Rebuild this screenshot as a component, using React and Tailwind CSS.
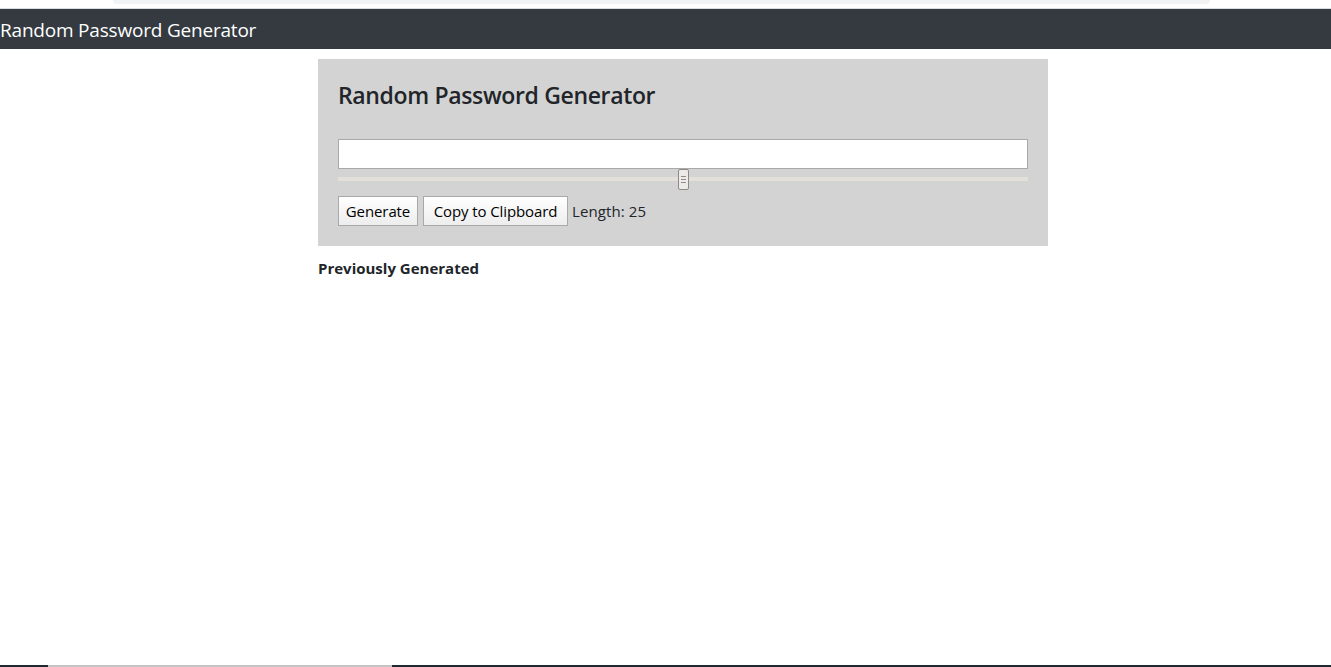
import { useState } from 'react';

// Simple password generator page
export default function App() {
  const [length] = useState(25);
  const [password] = useState('');

  return (
    <div className="h-[667px] flex flex-col bg-white overflow-hidden" style={{ fontFamily: '"Open Sans", "Noto Sans", sans-serif' }}>
      {/* browser chrome remnant */}
      <div className="h-[8px] flex">
        <div className="ml-[113px] w-[1097px] h-[4px] bg-[#f1f3f4] rounded-b-[10px]" />
      </div>
      <div className="h-[1px] bg-[#dadce0]" />

      {/* Navbar */}
      <nav className="h-[40px] bg-[#343a40] flex items-center pt-[3px]">
        <span className="text-white text-[19px] tracking-[-0.2px] leading-none">Random Password Generator</span>
      </nav>

      <main className="ml-[318px] w-[730px] mt-[10px]">
        <section className="bg-[#d3d3d3] p-5">
          <h2 className="text-[23px] font-semibold text-[#212529] leading-8 tracking-[-0.35px]">Random Password Generator</h2>

          <input
            type="text"
            readOnly
            value={password}
            className="mt-[28px] block w-full h-[30px] bg-white border border-[#a9a9a9] outline-none px-1"
          />

          {/* range slider */}
          <div className="relative h-[21px]">
            <div className="absolute left-0 right-0 top-[8px] h-[4px] bg-[#e3dfd9]" />
            <div className="absolute left-[340px] top-0 w-[11px] h-[21px] bg-[#ecebea] border border-[#8e8a86] rounded-[2px] flex flex-col items-center justify-center gap-[2px]">
              <span className="block w-[5px] h-[1px] bg-[#8e8a86]" />
              <span className="block w-[5px] h-[1px] bg-[#8e8a86]" />
              <span className="block w-[5px] h-[1px] bg-[#8e8a86]" />
            </div>
          </div>

          <div className="mt-[6px] flex items-center text-[15px] text-[#212529]">
            <button className="h-[30px] w-[80px] border border-[#a9a9a9] bg-gradient-to-b from-white to-[#ededed] text-black tracking-[-0.1px]">Generate</button>
            <button className="ml-[5px] h-[30px] w-[145px] border border-[#a9a9a9] bg-gradient-to-b from-white to-[#ededed] text-black tracking-[-0.1px]">Copy to Clipboard</button>
            <span className="ml-[4px] tracking-[0.1px]">Length: {length}</span>
          </div>
        </section>

        <h3 className="mt-[10px] text-[15px] font-bold text-[#212529] leading-6 tracking-[0px]">Previously Generated</h3>
      </main>

      <div className="flex-1" />
      {/* taskbar edge */}
      <div className="h-[2px] flex">
        <div className="w-[48px] bg-[#1f2a33]" />
        <div className="w-[344px] bg-[#c4c4c4]" />
        <div className="flex-1 bg-[#1f2a33]" />
      </div>
    </div>
  );
}
